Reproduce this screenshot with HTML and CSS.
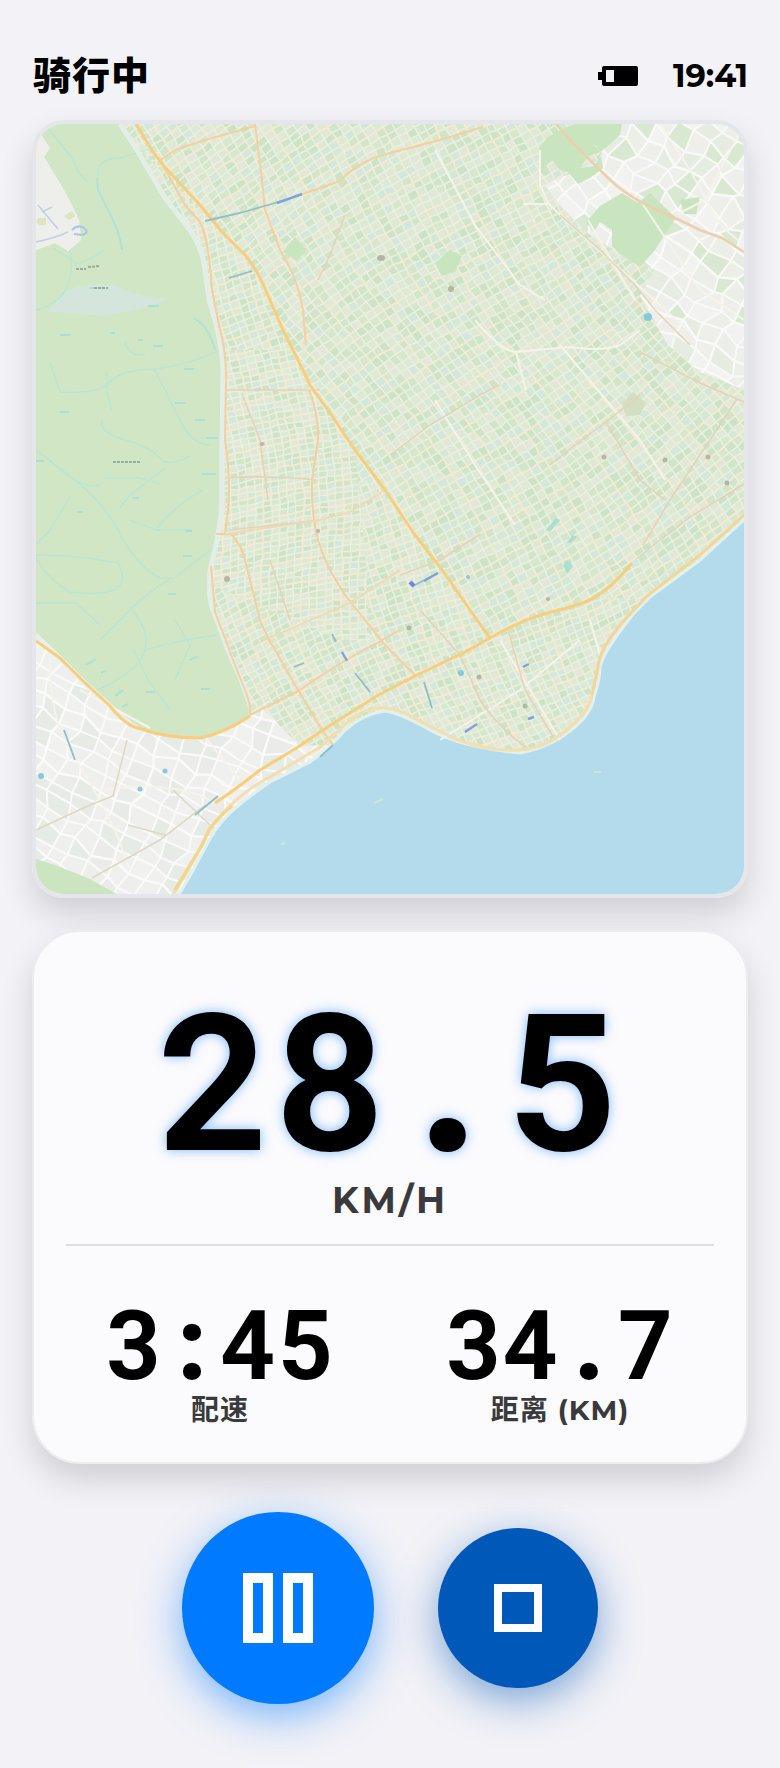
FILE: index.html
```html
<!DOCTYPE html>
<html lang="zh-CN">
<head>
<meta charset="utf-8">
<meta name="viewport" content="width=device-width, initial-scale=1">
<title>骑行中</title>
<link rel="stylesheet" href="styles.css">
</head>
<body>
<main class="screen">
  <header class="topbar">
    <h1 class="title">骑行中</h1>
    <div class="status">
      <svg class="battery" viewBox="0 0 40 20" role="img" aria-label="电量">
        <path fill-rule="evenodd" d="M6 0H38Q40 0 40 2V18Q40 20 38 20H6Q4 20 4 18V14H0V6H4V2Q4 0 6 0ZM8 4V16H16V4Z"/>
      </svg>
      <time class="clock">19:41</time>
    </div>
  </header>

  <section class="map-frame" aria-label="地图">
    <svg class="map" viewBox="36 124 708 770" preserveAspectRatio="xMidYMid slice">
      <defs>
        <clipPath id="clip-north"><path d="M110 120L153 152 200 205 256 270 283 330 283 350H190V200Z"/></clipPath>
        <clipPath id="clip-west"><path d="M200 325L283 328 310 385 355 450 365 550 370 640 340 640 200 580Z"/></clipPath>
        <clipPath id="clip-south"><path d="M200 560L260 545 320 540 365 480 400 512 490 638 530 618 600 597 645 600 600 750 500 760 380 720 330 752 240 720Z"/></clipPath>
        <clipPath id="clip-east"><path d="M110 120H750V600L632 620 490 640 200 340Z"/></clipPath>
        <clipPath id="clip-suburb"><path d="M600 124H750V392L700 372 668 345 640 296 655 270 622 255 590 235 560 205 545 185 600 160Z"/></clipPath>
        <clipPath id="clip-town"><path d="M30 630L83 680 133 724 165 736 205 737 249 713 262 708 300 746 340 745 240 810 180 900H30Z"/></clipPath>
        <filter id="soft" x="0" y="0" width="1" height="1"><feGaussianBlur stdDeviation="0.5"/></filter>
      </defs>
      <rect x="36" y="124" width="708" height="770" fill="#e6ecdc"/>
      <g filter="url(#soft)">
        <g id="streets"></g>

        <!-- parks -->
        <g fill="#c9e5bf">
          <path d="M539 148L547 138 560 130 575 124H592L594 145 600 152 588 156 580 168 568 172 560 170 552 160 540 172Z"/>
          <path d="M592 124H622L620 135 608 146 600 152 603 168 590 178 578 184 568 172 580 168 594 166 602 154 592 140Z"/>
          <path d="M586 222L600 206 622 193 638 203 650 193 676 218 664 236 655 250 640 267 620 254 612 246 612 230 600 222 594 232Z"/>
          <path d="M680 200L700 197 696 214 684 214Z"/>
          <path d="M435 263L450 250 462 256 455 272 442 276Z"/>
          <path d="M283 252L295 237 307 250 297 261Z"/>
        </g>
        <path d="M622 404L633 392 646 403 640 415 626 416Z" fill="#d3dfc0"/>

        <!-- forest -->
        <path d="M48 124H120L137 150 165 198 190 230 200 250 205 270 209 300 217 330 222 370 221 450 221 500 218 530 210 570 209 600 214 615 225 645 240 680 248 705 249 717 228 729 200 737 170 736 140 728 110 703 83 680 60 655 36 632V250L55 243 68 251 81 240 79 220 72 205 60 183 44 157 50 148 40 133Z" fill="#d0e6c5"/>
        <path d="M40 133L50 148 44 157 60 183 72 205 79 220 81 240 68 251 55 243 36 250V124Z" fill="#eeefeb"/>
        <path d="M36 242Q55 238 68 232M42 212L52 207M38 205L58 229" fill="none" stroke="#c3cfe6" stroke-width="1.6"/>
        <path d="M72 230q6-6 12-2 6 5-2 7l-8-1" fill="none" stroke="#b0c2e6" stroke-width="2"/>
        <path d="M36 222q5 6 10 2v-6h-8zM64 216l8-5 3 5-6 4z" fill="#dce5bf"/>
        <path d="M45 313L56 302Q62 288 88 285T130 292Q148 298 168 298 150 308 130 311 105 318 80 314 60 311 45 313Z" fill="#d4e5dc"/>
        <g fill="none" stroke="#bce4d2" stroke-width="1.3" stroke-linejoin="round">
          <path d="M48 128L72 158Q76 172 88 182M155 147L120 158Q96 158 98 176M53 248L78 264Q94 258 104 250M36 310Q78 300 70 250"/>
          <path d="M220 350Q190 365 154 369 120 370 110 382T60 392L50 362M107 372V392L112 410M154 369Q168 395 180 420T210 445M125 342Q128 356 145 355M102 420Q98 432 125 440T160 458 190 456"/>
          <path d="M36 450L75 480Q105 505 118 530T145 568 172 578Q150 590 132 608T100 640M36 555Q80 555 118 563 138 600 70 592 48 580 36 558M172 580Q195 562 210 550M50 460Q80 490 100 485M70 497L50 530 36 545M104 478H140L160 484M165 468L130 495 120 508M202 490Q170 510 156 530L130 520M156 530H190"/>
          <path d="M131 608Q150 630 145 650T98 690M145 650Q180 640 216 635M175 620L190 645 175 680M134 650L148 680 170 710M36 603H76L100 625"/>
        </g>
        <g stroke="#a8e0d3" stroke-width="1.8">
          <path d="M60 335h10M110 333h5M138 340h5M153 346h10M184 369h10M175 403h11M195 420h10M60 412h9M206 438h12M202 474h14M36 461h8M185 531h7M183 556h9M168 594h8M77 512h6M133 498h6M86 665l10-6M101 673l5-2M115 696l8-6M146 692h9M201 689h9M190 660l8-4M122 707l6-3M90 288h14M148 306h11"/>
        </g>
        <path d="M76 269h10M88 267l12-1M94 288h14M113 462h28" stroke="#93aea2" stroke-width="2" stroke-dasharray="3 1"/>
        <path d="M97 178L98 190 108 210Q120 232 122 250M194 318Q210 328 215 350" fill="none" stroke="#b0e2d8" stroke-width="2"/>
        <!-- pale verge beside the forest -->
        <path d="M120 124L137 150 165 198 190 230Q203 250 205 270L209 300Q222 340 223 370L222 450 222 500Q221 530 210 570 207 600 215 615L226 645 241 680 250 705" fill="none" stroke="#e4eee8" stroke-width="5"/>
        <path d="M36 636L60 658 84 682 133 727" fill="none" stroke="#e7f0ea" stroke-width="5"/>

        <!-- water -->
        <path d="M178 896L190 876 205 848Q215 828 228 815T270 782L310 762Q330 748 345 730 365 713 385 711 400 713 430 730T520 753Q548 748 570 731T594 697Q600 680 600 667 604 650 635 612L650 597 700 560 746 518V896Z" fill="#b3dbec" stroke="#e2f1ec" stroke-width="3"/>
        <path d="M374 803l9-4M281 845l4-3M594 772h7" stroke="#cde5da" stroke-width="2"/>
        <path d="M36 859L58 866 90 879 120 896H36Z" fill="#cbe5c1"/>

        <!-- secondary streets -->
        <g fill="none" stroke="#f5f3ea" stroke-width="2">
          <path d="M540 150V185L548 203 560 215 690 332M523 204H550M475 320Q500 350 515 352L570 347Q600 352 620 345L640 330M435 150L475 225 520 285 545 300M435 400L475 465 515 525M516 352L526 390M560 345L640 440 665 480M588 220L635 300"/>
          <path d="M744 124L705 200 678 214M660 124L690 170 720 225 744 245M744 320L700 290 640 200M50 660Q50 720 70 750T115 830L130 870M80 690L150 728M205 737L240 780M100 790Q180 780 215 803"/>
          <path d="M440 740L520 690 580 640M500 640L560 740M590 620L600 655"/>
        </g>
        <g fill="none" stroke="#e6d2b8" stroke-width="1.5">
          <path d="M560 215L600 250 635 285 655 310 690 345M744 402L700 383 640 352M737 399L700 455 670 500 643 545M744 484L690 517 636 559M606 422L640 480 665 500M390 455L430 425 480 395 500 385M550 465L575 445 606 422 640 395M480 534L440 560 400 575M420 610L460 655 480 700Q500 730 530 750M508 630L525 690 555 740M318 280L330 255 345 215M225 390H320M242 394L260 440 268 500M226 478Q270 475 316 480M230 530L320 520M270 560L290 620"/>
          <path d="M36 830L90 805 113 796 127 740M92 878L160 840 205 805M128 825L165 835M173 790L210 825" stroke="#ddd8c3"/>
        </g>
        <g fill="none" stroke="#f5cf9d" stroke-width="2" stroke-linejoin="round">
          <path d="M160 160L175 150 205 140 255 126M255 124L262 180 265 210 280 250Q298 278 303 310L306 345M160 160L185 205 200 222Q209 240 212 290L220 330Q226 350 226 380L225 440Q231 480 228 510L225 534"/>
          <path d="M216 534H231Q242 546 245 560L260 620 268 638 298 690 322 730 333 745M211 566L215 612 235 665 247 695Q251 705 250 715"/>
          <path d="M309 390Q319 415 318 440L312 480Q311 515 318 540T345 595L365 620 385 645 416 676M250 715L300 690Q325 672 355 655L400 630M300 195L340 181Q360 160 390 153L440 140 483 127"/>
        </g>
        <path d="M225 534L320 520 350 512 382 492M260 642L350 603 400 570" fill="none" stroke="#f3d7b0" stroke-width="1.6"/>
        <path d="M556 124L575 145 605 175Q630 200 665 213L700 230 722 238 744 252" fill="none" stroke="#edcfae" stroke-width="2.6"/>

        <!-- arterial roads -->
        <g fill="none" stroke="#f8cd7c" stroke-width="3" stroke-linejoin="round">
          <path d="M136 124L153 152Q163 166 175 178L200 205 222 232 245 255Q258 270 270 300L283 330 293 350 310 385 330 413 355 450 385 490 415 535 440 567 477 620 490 638"/>
          <path d="M632 563Q612 588 590 600 570 608 555 611 520 620 490 638L463 653 417 675 375 697 323 730 298 747 260 770Q235 790 215 803"/>
          <path d="M36 641L60 658 83 681 110 706Q125 725 138 728 165 738 200 738 225 733 250 716"/>
          <path d="M744 515L700 555 648 595 632 612Q600 645 598 667L592 695" stroke="#f4d597" stroke-width="3"/>
          <path d="M592 695Q590 710 568 729T520 750Q490 752 455 739L400 711Q385 705 365 711 350 718 322 746L268 778Q235 795 209 830L201 847 187 871 173 894" stroke="#f2deae" stroke-width="3"/>
        </g>
        <path d="M232 806Q220 815 209 830L201 847 175 890" fill="none" stroke="#f3d68e" stroke-width="3.4"/>

        <!-- stations and landmarks -->
        <g fill="none" stroke="#8fbdca" stroke-width="1.8">
          <path d="M205 221L240 213 275 203 300 195M229 278L252 271M413 586L438 573M332 634L336 642M355 673L370 692M424 682L432 708M320 757L333 745M294 667L304 663M64 730L75 760M195 815L218 796"/>
        </g>
        <path d="M424 581L438 573M277 203L302 194M342 652l5 9M523 667l6-3M465 732l12-8M528 719l6-2" fill="none" stroke="#7fa3d8" stroke-width="2.4"/>
        <path d="M410 582l4 4" stroke="#6f84f0" stroke-width="4"/>
        <g fill="#85c9dc"><circle cx="165" cy="771" r="2.5"/><circle cx="140" cy="789" r="2.5"/><circle cx="468" cy="577" r="2"/><circle cx="41" cy="776" r="3"/><circle cx="461" cy="673" r="3"/><circle cx="648" cy="317" r="4"/><path d="M546 530l10-12 4 2-10 12zM567 542l6-7 4 2-6 6zM563 565l5-5 5 6-6 8z" fill="#aadfd2"/></g>
        <g fill="#b6b5a6"><ellipse cx="381" cy="258" rx="4" ry="3"/><ellipse cx="451" cy="289" rx="3" ry="3"/><circle cx="604" cy="457" r="2.5"/><circle cx="665" cy="460" r="2.5"/><circle cx="708" cy="457" r="2.5"/><circle cx="727" cy="483" r="2.5"/><circle cx="227" cy="579" r="3"/><circle cx="548" cy="599" r="2"/><circle cx="479" cy="677" r="2.5"/><circle cx="525" cy="706" r="2.5"/><circle cx="318" cy="531" r="2"/><circle cx="262" cy="444" r="2"/><circle cx="409" cy="628" r="2.5"/></g>
      </g>
    </svg>
  </section>

  <section class="stats">
    <div class="speed">
      <div class="speed-value">28.5</div>
      <div class="speed-unit">KM/H</div>
    </div>
    <div class="pair">
      <div class="metric">
        <div class="metric-value">3:45</div>
        <div class="metric-label">配速</div>
      </div>
      <div class="metric">
        <div class="metric-value">34.7</div>
        <div class="metric-label">距离 (KM)</div>
      </div>
    </div>
  </section>

  <div class="controls">
    <button class="control pause" type="button" aria-label="暂停"><span class="bar"></span><span class="bar"></span></button>
    <button class="control stop" type="button" aria-label="停止"><span class="square"></span></button>
  </div>
</main>
<script src="map.js"></script>
</body>
</html>
```
FILE: styles.css
```css
* { box-sizing: border-box; }

body {
  margin: 0;
  background: #f2f2f7;
  color: #000;
  font-family: Montserrat, "Noto Sans CJK SC", sans-serif;
}

.screen {
  display: flex;
  flex-direction: column;
  padding: 48px 32px 64px;
}

.topbar {
  display: flex;
  align-items: center;
  justify-content: space-between;
  height: 56px;
  margin-bottom: 16px;
}

.title {
  margin: 0;
  padding-left: 1px;
  font-size: 38px;
  line-height: 56px;
  font-weight: 800;
  letter-spacing: 1px;
}

.status {
  display: flex;
  align-items: center;
  gap: 35px;
}

.battery { width: 40px; height: 20px; }

.clock {
  font-size: 32px;
  line-height: 40px;
  font-weight: 700;
}

.map-frame {
  aspect-ratio: 716 / 778;
  border: 4px solid #e5e6eb;
  border-radius: 32px;
  overflow: hidden;
  box-shadow: 0 16px 32px rgba(0, 0, 0, 0.14);
}

.map {
  display: block;
  width: 100%;
  height: 100%;
}

.stats {
  margin-top: 32px;
  padding: 56px 32px 32px;
  border: 2px solid #ededf0;
  border-radius: 48px;
  background: #fbfbfd;
  box-shadow: 0 16px 32px rgba(0, 0, 0, 0.14);
}

.speed {
  padding-bottom: 20px;
  border-bottom: 2px solid #dddde1;
  text-align: center;
}

.speed-value {
  font-family: "Roboto Mono", Roboto, sans-serif;
  font-size: 192px;
  line-height: 176px;
  font-weight: 700;
  letter-spacing: 1px;
  text-shadow: 0 0 12px rgba(0, 122, 255, 0.5);
}

.speed-unit {
  margin-top: 12px;
  color: #3a3a3c;
  font-size: 36px;
  line-height: 48px;
  font-weight: 700;
  letter-spacing: 3px;
}

.pair {
  display: grid;
  grid-template-columns: 1fr 1fr;
  gap: 32px;
  padding-top: 47px;
  text-align: center;
}

.metric-value {
  font-family: "Roboto Mono", Roboto, sans-serif;
  font-size: 96px;
  line-height: 97px;
  font-weight: 700;
}

.metric-label {
  color: #3a3a3c;
  font-size: 28px;
  line-height: 40px;
  font-weight: 700;
  letter-spacing: 1px;
}

.controls {
  display: flex;
  align-items: center;
  justify-content: center;
  gap: 64px;
  margin-top: 48px;
}

.control {
  display: flex;
  align-items: center;
  justify-content: center;
  gap: 10px;
  padding: 0;
  border: 0;
  border-radius: 50%;
  cursor: pointer;
}

.pause {
  width: 192px;
  height: 192px;
  background: #007aff;
  box-shadow: 0 12px 40px rgba(0, 122, 255, 0.5);
}

.stop {
  width: 160px;
  height: 160px;
  background: #0058b8;
  box-shadow: 0 12px 40px rgba(0, 88, 184, 0.5);
}

.bar {
  width: 30px;
  height: 70px;
  border: 10px solid #fff;
}

.square {
  width: 48px;
  height: 48px;
  border: 8px solid #fff;
}
```
FILE: map.js
```js
// Fills each district of the map with a slightly irregular street grid.
(function () {
  var seed = 7;
  function rnd() {
    seed = (seed * 16807) % 2147483647;
    return seed / 2147483647;
  }
  function district(o) {
    var a = o.angle * Math.PI / 180, c = Math.cos(a), s = Math.sin(a);
    function point(i, j) {
      var u = i * o.w, v = j * o.h;
      var x = o.x + u * c - v * s, y = o.y + u * s + v * c;
      var k = Math.sin(i * 12.9 + j * 78.2) * 43758.5, m = Math.sin(i * 39.3 + j * 11.1) * 24634.6;
      k -= Math.floor(k); m -= Math.floor(m);
      return [
        x + 9 * Math.sin(y / 60) + (k - 0.5) * o.jitter,
        y + 9 * Math.sin(x / 75) + (m - 0.5) * o.jitter
      ];
    }
    var fills = o.fills.map(function () { return ''; });
    var lines = ['', ''];
    var n = o.span;
    function f(p) { return p[0].toFixed(1) + ' ' + p[1].toFixed(1); }
    for (var i = -n; i < n; i++) {
      for (var j = -n; j < n; j++) {
        var p = point(i, j);
        if (p[0] < 10 || p[0] > 770 || p[1] < 100 || p[1] > 920) continue;
        var q = point(i + 1, j), r = point(i + 1, j + 1), t = point(i, j + 1);
        if (rnd() < o.density) {
          fills[Math.floor(rnd() * fills.length)] += 'M' + f(p) + 'L' + f(q) + 'L' + f(r) + 'L' + f(t) + 'Z';
        }
        lines[j % 4 === 0 ? 1 : 0] += 'M' + f(p) + 'L' + f(q);
        lines[i % 5 === 0 ? 1 : 0] += 'M' + f(p) + 'L' + f(t);
      }
    }
    var out = '<g clip-path="url(#' + o.clip + ')"><rect x="36" y="124" width="708" height="770" fill="' + o.base + '"/>';
    fills.forEach(function (d, k) { out += '<path d="' + d + '" fill="' + o.fills[k] + '"/>'; });
    out += '<path d="' + lines[0] + '" fill="none" stroke="' + o.line + '" stroke-width="' + o.lw + '"/>';
    out += '<path d="' + lines[1] + '" fill="none" stroke="' + o.major + '" stroke-width="' + (o.lw + 0.3) + '"/></g>';
    return out;
  }
  var greens = ['#cfe6ca', '#d5e8ce', '#d1e8da', '#dbe9d5', '#e0e8d8', '#cbe4c8'];
  var city = { base: '#dce9d5', fills: greens, density: 0.95, jitter: 2, line: '#eeeede', major: '#f5ead4', lw: 1.5, span: 110 };
  function make(extra) { return district(Object.assign({}, city, extra)); }
  document.getElementById('streets').innerHTML =
    make({ clip: 'clip-east', angle: -34, x: 500, y: 400, w: 9, h: 8 }) +
    make({ clip: 'clip-south', angle: -24, x: 350, y: 650, w: 8, h: 7 }) +
    make({ clip: 'clip-west', angle: -6, x: 250, y: 450, w: 8, h: 6 }) +
    make({ clip: 'clip-north', angle: -14, x: 250, y: 250, w: 8, h: 7 }) +
    make({ clip: 'clip-suburb', angle: 38, x: 680, y: 240, w: 20, h: 15, jitter: 13, density: 0.7, base: '#eeefeb', line: '#f9f9f7', major: '#fafaf8', lw: 2, fills: ['#eceee8', '#e7ece3', '#f2f2f0', '#d9e8d0', '#eff0ed'] }) +
    make({ clip: 'clip-town', angle: 28, x: 130, y: 800, w: 20, h: 15, jitter: 10, density: 0.6, base: '#efefee', line: '#fafafa', major: '#fbfbfa', lw: 2, fills: ['#ebecea', '#e7ebe5', '#f1f1f0', '#e6ebe6', '#eeeeec', '#f0f0ef'] });
})();
```
